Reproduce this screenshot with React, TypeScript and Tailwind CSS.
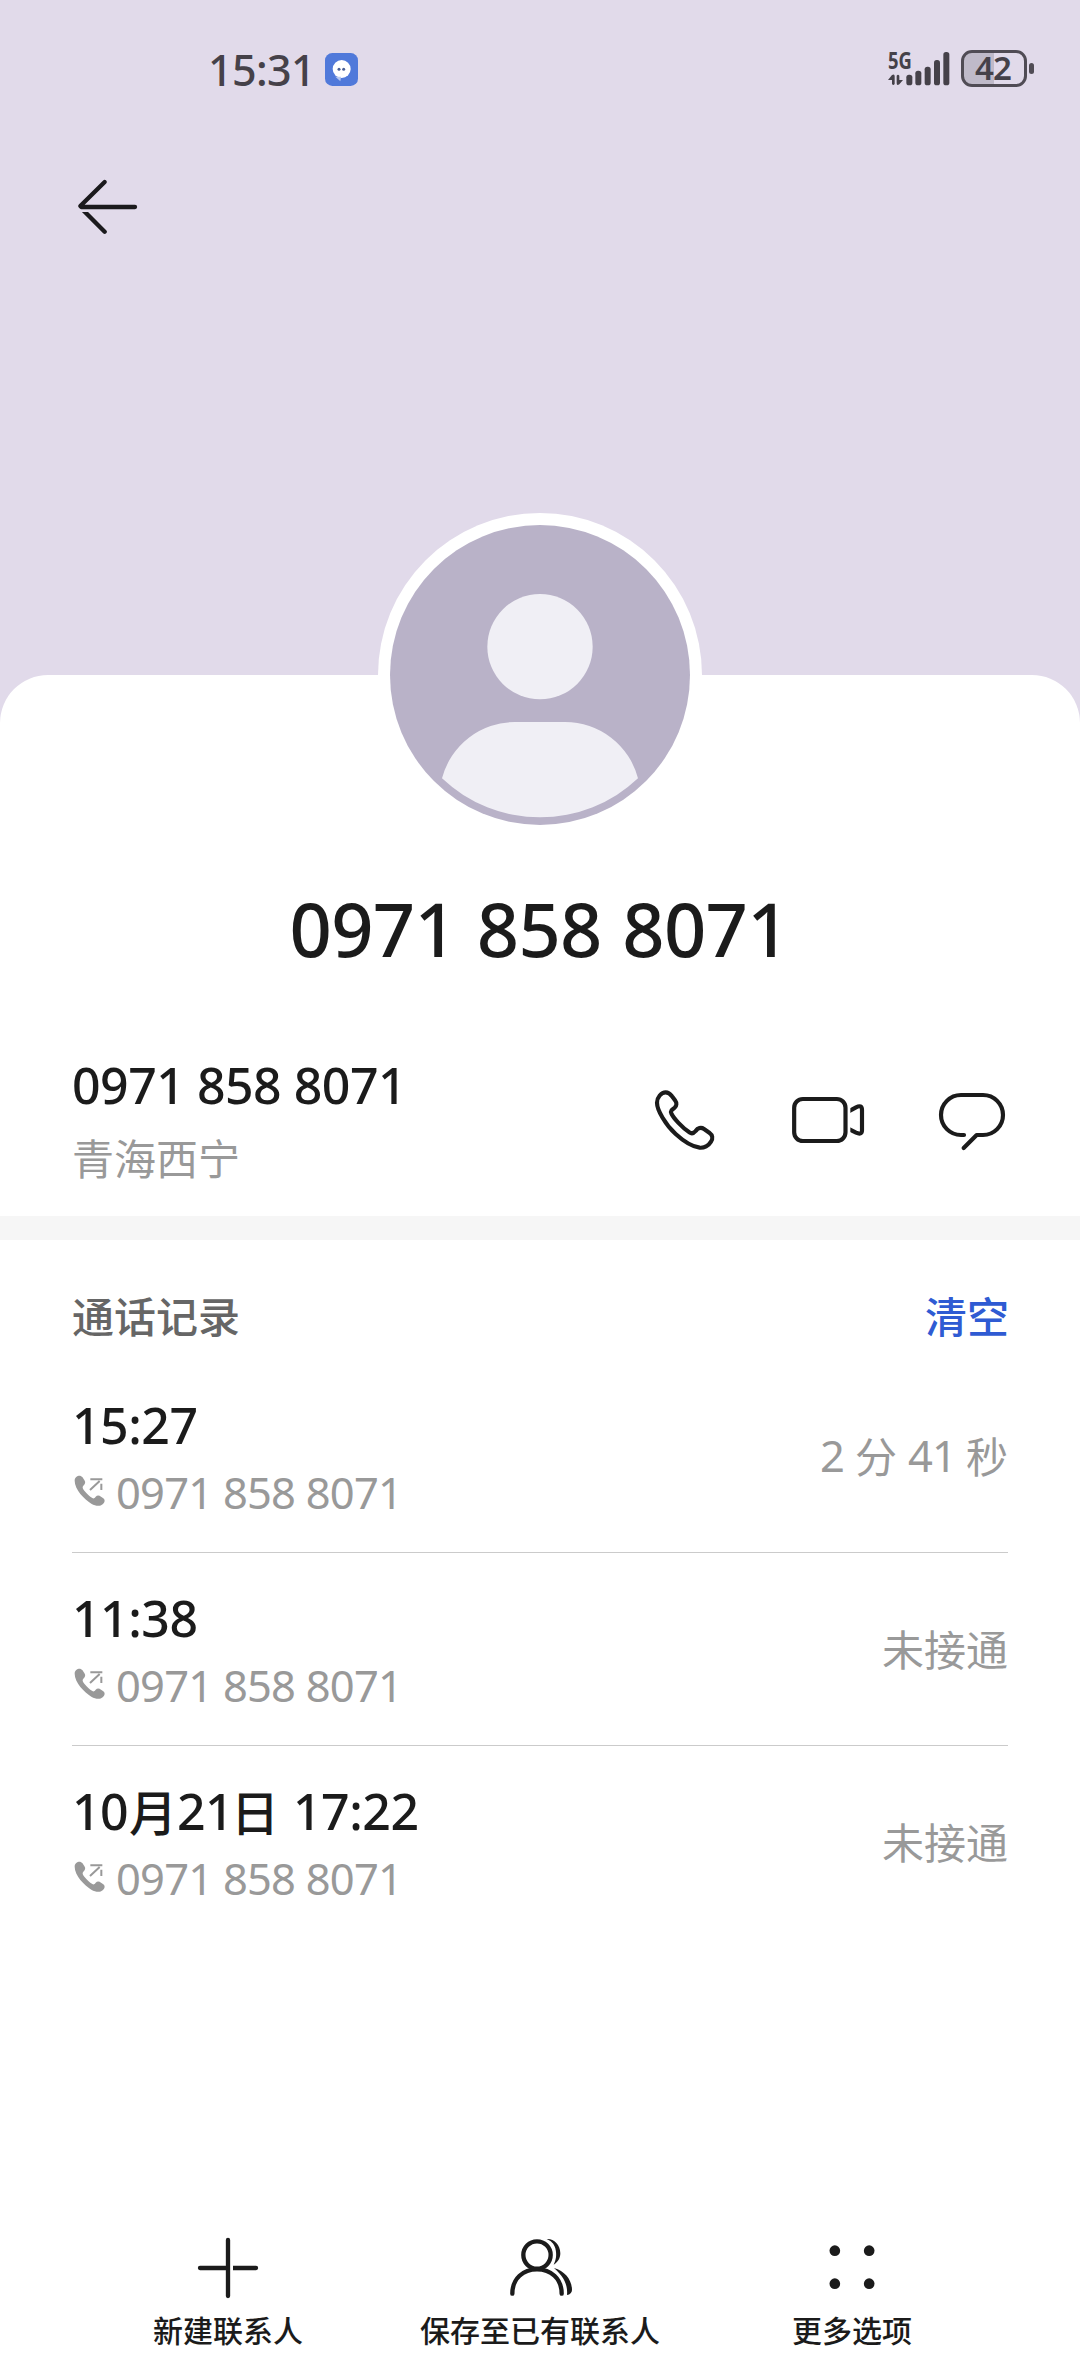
import React from 'react';

/** One line of digits. `className` sets the size, weight, tracking and the box width. */
function Digits({ children, className = '' }: { children: React.ReactNode; className?: string }) {
  return (
    <span className={`block whitespace-pre font-['Noto_Sans','Noto_Sans_CJK_SC',sans-serif] ${className}`}>
      {children}
    </span>
  );
}

function StatusBar() {
  return (
    <div className="flex h-[136px] shrink-0 items-start pl-[208px] pr-[46px] text-[#454149]">
      <Digits className="mt-[48px] w-[117px] text-[43px] leading-[44px] font-medium tracking-[-0.014em]">15:31</Digits>
      <svg className="mt-[53px] h-[33px] w-[33px]" viewBox="405 69 99 99">
        <rect x="405" y="69" width="99" height="99" rx="22" fill="#5079DA" />
        <circle cx="455" cy="117" r="27" fill="#fff" />
        <path d="M436 140 L451 154 L453 140Z" fill="#b9c9f0" />
        <circle cx="447" cy="118" r="4.5" fill="#4a5f96" />
        <circle cx="461" cy="118" r="4.5" fill="#4a5f96" />
      </svg>
      <div className="ml-auto flex">
        <div className="mt-[49px] flex h-[40px] w-[23px] flex-col">
          <span className="block h-[22px] origin-left scale-x-[0.8] font-['Noto_Sans',sans-serif] text-[23px] leading-[22px] font-bold">5G</span>
          <svg className="mt-[3px] h-[12px] w-[15px]" viewBox="79 132 45 36">
            <path d="M79 150 L91 135 Q99 130 99 139 V162 Q95 168 91 162 V150Z M124 150 L113 163 Q105 168 105 160 V137 Q109 131 113 137 V150Z" fill="#454149" />
          </svg>
        </div>
        <svg className="-ml-[5px] mt-[52px] h-[34px] w-[44px]" viewBox="134 66 132 102" fill="#454149">
          <rect x="135" y="134" width="18" height="32" rx="8" />
          <rect x="162" y="122" width="18" height="44" rx="8" />
          <rect x="190" y="110" width="18" height="56" rx="8" />
          <rect x="218" y="90" width="18" height="76" rx="8" />
          <rect x="246" y="66" width="18" height="100" rx="8" />
        </svg>
        <div className="ml-[11px] mt-[50px] flex h-[37px] w-[66px] items-center justify-center rounded-[11px] border-[3px] border-[#504c55] bg-[linear-gradient(90deg,#bfbac9_50%,transparent_50%)]">
          <span className="-ml-[2px] -mt-[2px] font-['Noto_Sans',sans-serif] text-[33px] leading-[32px] font-semibold tracking-[-1px]">42</span>
        </div>
        <div className="ml-[2px] mt-[63px] h-[11px] w-[5px] rounded-full bg-[#504c55]" />
      </div>
    </div>
  );
}

function BackArrow() {
  return (
    <svg className="h-[60px] w-[66px]" viewBox="78 51 198 180" fill="none" stroke="#1b1a1d" strokeWidth="13" strokeLinecap="round" strokeLinejoin="round">
      <clipPath id="lowerArm"><rect x="78" y="156" width="198" height="80" /></clipPath>
      <path d="M164 66 L91 138 L94 141 H255" />
      <path d="M90 141 L164 215" clipPath="url(#lowerArm)" />
    </svg>
  );
}

function Avatar() {
  return (
    <svg className="absolute -top-[162px] left-1/2 h-[324px] w-[324px] -translate-x-1/2" viewBox="54 39 972 972">
      <path d="M54 525 A486 486 0 0 1 1026 525Z" fill="#fff" />
      <circle cx="540" cy="525" r="450" fill="#B9B2C8" />
      <circle cx="540" cy="440" r="158" fill="#F0EFF5" />
      <path d="M246 835 A226 226 0 0 1 465 666 H615 A226 226 0 0 1 834 835 A428 428 0 0 1 246 835Z" fill="#F0EFF5" />
    </svg>
  );
}

function CallIcon() {
  return (
    <svg className="h-[62px] w-[62px]" viewBox="100 87 186 186" fill="none" stroke="#1b1b1b" strokeWidth="12.5" strokeLinejoin="round">
      <path d="M109 128 C109 112 122 97 135 97 C144 97 149 102 154 109 L163 121 C169 129 168 138 162 143 C154 149 149 152 152 160 C158 174 185 203 206 217 C213 222 220 219 225 213 C231 204 241 201 250 207 L266 218 C276 225 277 236 271 245 C264 257 250 264 237 263 C215 260 190 245 165 222 C135 195 109 150 109 128Z" />
    </svg>
  );
}

function VideoIcon() {
  return (
    <svg className="h-[62px] w-[76px]" viewBox="510 87 228 186" fill="none" stroke="#1b1b1b" strokeWidth="12.5">
      <clipPath id="lens"><rect x="691" y="100" width="60" height="160" /></clipPath>
      <rect x="522.5" y="117" width="154" height="126" rx="26" />
      <path d="M680 157 L708 142 Q726 133 726 150 V211 Q726 226 708 218 L680 204" clipPath="url(#lens)" />
    </svg>
  );
}

function MessageIcon() {
  return (
    <svg className="h-[62px] w-[68px]" viewBox="954 87 204 186" fill="none" stroke="#1b1b1b" strokeWidth="12.5" strokeLinecap="round" strokeLinejoin="round">
      <path d="M1032 225 H1023 A60 60 0 0 1 1023 105 H1089 A60 60 0 0 1 1089 225 H1070 L1031 264" />
    </svg>
  );
}

function OutgoingIcon() {
  return (
    <svg className="h-[34px] w-[34px]" viewBox="67 612 102 102" fill="#999">
      <path d="M75 632 C75 622 85 616 93 618 C99 620 100 625 104 630 C109 637 106 642 101 647 C97 651 99 656 104 662 C112 672 120 679 128 684 C132 687 135 684 138 680 C143 675 149 676 154 680 L161 685 C167 690 166 697 160 702 C150 711 138 708 125 701 C104 688 75 658 75 632Z" />
      <path d="M122 627.500 H158 M121 660 L150 633 M155 641 V660" fill="none" stroke="#999" strokeWidth="6" />
    </svg>
  );
}

function PlusIcon() {
  return (
    <svg className="h-[62px] w-[62px]" viewBox="201 81 186 186" fill="none" stroke="#1b1b1b" strokeWidth="13" strokeLinecap="round">
      <clipPath id="plusRight"><rect x="309" y="160" width="90" height="30" /></clipPath>
      <path d="M294 90 V258 M210 174 H292" />
      <path d="M300 174 H378" clipPath="url(#plusRight)" />
    </svg>
  );
}

function PeopleIcon() {
  return (
    <svg className="h-[62px] w-[66px]" viewBox="21 81 198 186" fill="none" stroke="#1b1b1b" strokeWidth="13" strokeLinecap="round">
      <circle cx="111" cy="135" r="41" />
      <path d="M37 251 C37 205 70 178 111 178 C152 178 185 205 185 251" />
      <path d="M140 87 C160 85 181 103 181 130 C181 145 173 157 161 164 C168 150 171 135 166 115 C162 100 152 92 140 87Z" fill="#1b1b1b" stroke="none" />
      <path d="M162 174 C195 183 216 210 216 240 C216 248 210 254 201 255 C203 232 198 205 162 174Z" fill="#1b1b1b" stroke="none" />
    </svg>
  );
}

function DotsIcon() {
  return (
    <svg className="h-[62px] w-[62px]" viewBox="963 81 186 186" fill="#1b1b1b">
      <circle cx="1004.500" cy="122" r="16" />
      <circle cx="1107.500" cy="122" r="16" />
      <circle cx="1004.500" cy="221" r="16" />
      <circle cx="1107.500" cy="221" r="16" />
    </svg>
  );
}

const SMALL = 'text-[43.5px] leading-[50px] font-normal tracking-[-0.018em]';
const BIG = 'text-[50px] leading-[60px] font-medium tracking-[-0.01em]';

function Missed() {
  return <span>未接通</span>;
}

function Duration() {
  return (
    <span className="flex">
      <Digits className={`w-[35px] ${SMALL}`}>2</Digits>
      分
      <Digits className={`ml-[11px] w-[58px] ${SMALL}`}>41</Digits>
      秒
    </span>
  );
}

const calls: { id: number; time: React.ReactNode; result: React.ReactNode }[] = [
  { id: 1, time: <Digits className={BIG}>15:27</Digits>, result: <Duration /> },
  { id: 2, time: <Digits className={BIG}>11:38</Digits>, result: <Missed /> },
  {
    id: 3,
    time: (
      <span className="flex text-[48px] leading-[58px] font-medium">
        <Digits className={`w-[57px] ${BIG}`}>10</Digits>
        月
        <Digits className={`w-[54px] ${BIG}`}>21</Digits>
        <span className="w-[62px]">日</span>
        <Digits className={BIG}>17:22</Digits>
      </span>
    ),
    result: <Missed />,
  },
];

function CallRow({ time, result, last }: { time: React.ReactNode; result: React.ReactNode; last: boolean }) {
  return (
    <li className={`mx-[72px] flex h-[193px] items-start justify-between ${last ? '' : 'border-b border-[#cbcbcb]'}`}>
      <div className="pt-[35px]">
        <div className="h-[60px] text-[#1b1b1b]">{time}</div>
        <div className="mt-[12px] flex h-[50px] items-start text-[#999]">
          <span className="pt-[7px]"><OutgoingIcon /></span>
          <Digits className={`ml-[10px] ${SMALL}`}>0971 858 8071</Digits>
        </div>
      </div>
      <div className="pt-[70px] text-[42px] leading-[50px] text-[#999]">{result}</div>
    </li>
  );
}

function Action({ icon, label }: { icon: React.ReactNode; label: string }) {
  return (
    <button className="flex w-[312px] flex-col items-center">
      {icon}
      <span className="mt-[10px] text-[30px] leading-[40px] font-medium whitespace-nowrap">{label}</span>
    </button>
  );
}

export default function App() {
  return (
    <div className="flex h-[2376px] w-[1080px] flex-col overflow-hidden bg-[#E1DAEA] font-['Noto_Sans_CJK_SC',sans-serif] text-[#1b1b1b]">
      <StatusBar />
      <header className="h-[539px] shrink-0 pl-[76px] pt-[41px]">
        <BackArrow />
      </header>
      <main className="relative flex grow flex-col rounded-t-[48px] bg-white">
        <Avatar />
        <h1 className="mt-[209px] flex h-[90px] justify-center">
          <Digits className="w-[501px] text-[74px] leading-[90px] font-medium tracking-[-0.009em] [word-spacing:2px]">0971 858 8071</Digits>
        </h1>
        <section className="mt-[78px] flex h-[164px] justify-between pl-[72px]">
          <div>
            <Digits className={BIG + ' mt-[3px]'}>0971 858 8071</Digits>
            <p className="mt-[17px] text-[42px] leading-[50px] text-[#999]">青海西宁</p>
          </div>
          <div className="flex items-start pt-[37px] pr-[74px]">
            <CallIcon />
            <span className="ml-[74.5px]"><VideoIcon /></span>
            <span className="ml-[72px]"><MessageIcon /></span>
          </div>
        </section>
        <div className="h-[24px] bg-[#f6f6f6]" />
        <section>
          <div className="flex h-[120px] items-start justify-between pr-[71px] pl-[72px] pt-[50px] text-[42px] leading-[50px] font-medium">
            <h2 className="text-[#666]">通话记录</h2>
            <button className="text-[#2f5bd3]">清空</button>
          </div>
          <ul>
            {calls.map((c, i) => (
              <CallRow key={c.id} time={c.time} result={c.result} last={i === calls.length - 1} />
            ))}
          </ul>
        </section>
        <nav className="mt-auto flex h-[139px] justify-center">
          <Action icon={<PlusIcon />} label="新建联系人" />
          <Action icon={<PeopleIcon />} label="保存至已有联系人" />
          <Action icon={<DotsIcon />} label="更多选项" />
        </nav>
      </main>
    </div>
  );
}
